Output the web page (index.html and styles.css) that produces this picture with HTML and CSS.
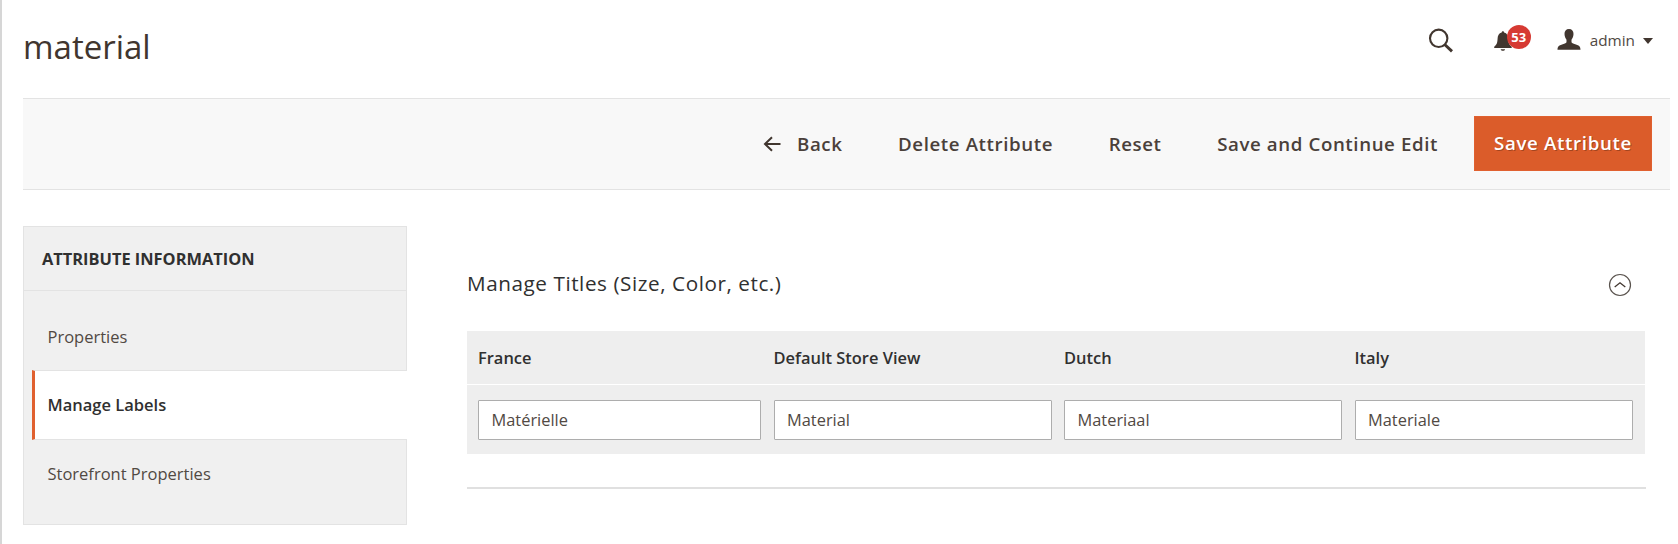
FILE: index.html
```html
<!DOCTYPE html>
<html lang="en">
<head>
<meta charset="utf-8">
<title>material</title>
<link rel="stylesheet" href="styles.css">
</head>
<body>
<div class="page">
  <header class="header">
    <h1 class="title">material</h1>
    <div class="tools">
      <svg class="search-icon" width="26" height="26" viewBox="0 0 26 26"><circle cx="10.7" cy="10.3" r="8.7" fill="none" stroke="#41362f" stroke-width="2.1"/><path d="M16.7 16.5l7.3 6.8" stroke="#41362f" stroke-width="3"/></svg>
      <div class="bell">
        <svg width="18" height="21" viewBox="0 0 18 21"><path d="M7.7 1.4C7.7-.2 10.1-.2 10.1 1.4c3 .8 4 3 4.1 6.200.2 4.600 1.200 6.500 3.500 8.200v1.100H.2v-1.100c2.300-1.700 3.200-3.600 3.400-8.200.1-3.200 1.200-5.400 4.100-6.200z" fill="#41362f"/><path d="M6.700 18.300h4.400c-.4 2-4 2-4.400 0z" fill="#41362f"/></svg>
        <span class="badge">53</span>
      </div>
      <div class="account">
        <svg width="24" height="21" viewBox="0 0 24 21"><path d="M12 0c3 0 4.600 2 4.500 5-.1 2.700-.9 4.200-2 5.700v2.500c.6 1.100 2.300 1.500 4.500 2.200 3.100 1 4.500 2 4.500 5.400H.5c0-3.400 1.400-4.400 4.500-5.400 2.200-.7 3.900-1.100 4.500-2.200v-2.500c-1.100-1.500-1.900-3-2-5.700C7.400 2 9 0 12 0z" fill="#41362f"/></svg>
        <span class="name">admin</span>
        <svg width="10" height="6" viewBox="0 0 10 6"><path d="M0 0h10L5 6z" fill="#41362f"/></svg>
      </div>
    </div>
  </header>

  <div class="toolbar">
    <a class="action back"><svg width="18" height="16" viewBox="0 0 18 16"><path d="M9 1.300L2 8l7 6.700M2 8h15.500" fill="none" stroke="#41362f" stroke-width="2"/></svg><span>Back</span></a>
    <a class="action delete">Delete Attribute</a>
    <a class="action reset">Reset</a>
    <a class="action continue">Save and Continue Edit</a>
    <button class="primary">Save Attribute</button>
  </div>

  <div class="columns">
    <nav class="side">
      <div class="side-title">ATTRIBUTE INFORMATION</div>
      <ul class="tabs">
        <li class="tab">Properties</li>
        <li class="tab active">Manage Labels</li>
        <li class="tab">Storefront Properties</li>
      </ul>
    </nav>
    <main class="content">
      <div class="section-title">
        <h2>Manage Titles (Size, Color, etc.)</h2>
        <svg width="24" height="24" viewBox="0 0 24 24"><circle cx="12" cy="12" r="10.500" fill="none" stroke="#5a534e" stroke-width="1.200"/><path d="M6.700 14L12 9.800l5.300 4.200" fill="none" stroke="#41362f" stroke-width="1.300"/></svg>
      </div>
      <div class="grid labels">
        <span>France</span><span>Default Store View</span><span>Dutch</span><span>Italy</span>
      </div>
      <div class="grid fields">
        <input value="Matérielle"><input value="Material"><input value="Materiaal"><input value="Materiale">
      </div>
    </main>
  </div>
</div>
</body>
</html>
```
FILE: styles.css
```css
* { box-sizing: border-box; }
body { margin: 0; background: #fff; font-family: "Open Sans", sans-serif; color: #41362f; }
.page { height: 544px; overflow: hidden; border-left: 2px solid #d6d6d6; padding: 0 8px 0 21px; }
.header { height: 98px; display: flex; justify-content: space-between; }
.title { margin: 24px 0 0; font-size: 33px; line-height: 45px; font-weight: 400; }
.tools { display: flex; align-items: flex-start; padding-right: 17px; }
.search-icon { margin-top: 28px; }
.bell { display: flex; margin: 31px 0 0 40px; position: relative; }
.badge { position: absolute; left: 13px; top: -6px; width: 24px; height: 24px; border-radius: 50%; background: #d63a33; color: #fff; font-size: 13px; font-weight: 700; line-height: 25px; text-align: center; }
.account { display: flex; align-items: center; margin: 28px 0 0 45px; height: 22px; }
.name { font-size: 15.3px; line-height: 22px; margin: 1px 8px 0 9px; color: #514943; }
.account svg:last-child { margin-top: 3px; }
.toolbar { height: 92px; display: flex; align-items: center; justify-content: flex-end; background: #f8f8f8; border-top: 1px solid #e3e3e3; border-bottom: 1px solid #e3e3e3; padding-right: 18px; }
.action { font-size: 18.7px; font-weight: 600; letter-spacing: .6px; line-height: 26px; white-space: nowrap; margin-right: 55.5px; color: #4a403a; }
.back { display: flex; align-items: center; gap: 16px; }
.continue { margin-right: 36px; }
.primary { width: 178px; height: 55px; margin-top: -1px; padding: 0 0 2px; border: 1px solid #e0602f; background: #db5c2a; color: #fff; font: 600 18.7px "Open Sans", sans-serif; letter-spacing: .65px; text-shadow: 1px 1px 0 rgba(0,0,0,.25); white-space: nowrap; }
.columns { display: flex; padding: 36px 24px 0 0; gap: 60px; }
.side { width: 384px; height: 299px; background: #f0f0f0; border: 1px solid #e3e3e3; }
.side-title { height: 64px; border-bottom: 1px solid #e3e3e3; padding-left: 18px; font-size: 16.4px; font-weight: 700; line-height: 63px; color: #303030; white-space: nowrap; }
.tabs { list-style: none; margin: 0; padding: 12px 0 0 8px; }
.tab { height: 68px; line-height: 67px; padding-left: 15.5px; font-size: 16.5px; color: #514943; white-space: nowrap; }
.active { height: 70px; margin: -1px -1px 0 0; border: 1px solid #e3e3e3; border-right: 0; border-left: 3px solid #e0602f; background: #fff; padding-left: 12.5px; font-weight: 600; color: #303030; }
.content { flex: 1; padding-top: 42px; height: 263px; border-bottom: 2px solid #e0e0e0; }
.section-title { display: flex; justify-content: space-between; height: 63px; padding-right: 14.500px; }
h2 { margin: 0; font-size: 20.7px; line-height: 31px; font-weight: 500; letter-spacing: .56px; color: #303030; }
.section-title svg { margin-top: 5px; }
.grid { display: grid; grid-template-columns: 283px 278px 278px 278.500px; column-gap: 12.500px; padding-left: 11px; margin-right: 1px; background: #eee; }
.labels { height: 53px; line-height: 53px; font-size: 16.450px; font-weight: 600; color: #303030; }
.fields { height: 69px; margin-top: 1px; padding-top: 15px; }
input { height: 40px; width: 100%; border: 1px solid #adadad; border-radius: 1px; padding: 0 12.500px 1px; background: #fff; font: 16.400px "Open Sans", sans-serif; color: #514943; }
```
